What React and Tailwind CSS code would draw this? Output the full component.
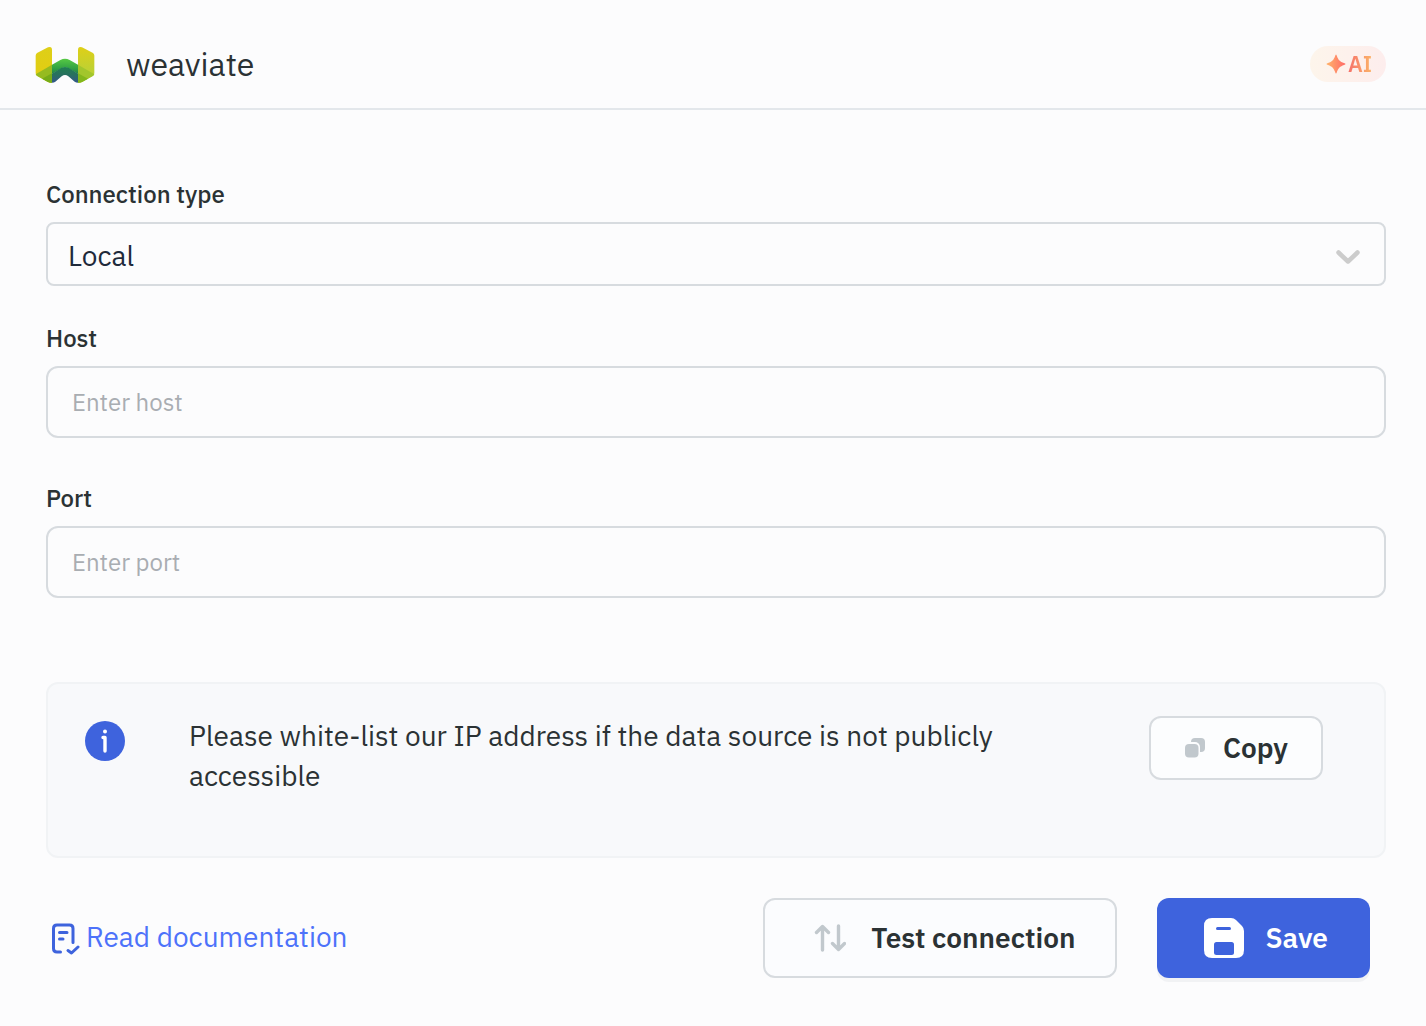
import React from "react";

function WeaviateLogo() {
  return (
    <svg viewBox="15 18 180 111" className="h-[37px] w-15" aria-hidden="true">
      <defs>
        <linearGradient id="wingL" x1="0" y1="0" x2="0" y2="1">
          <stop offset="0" stopColor="#decf18" />
          <stop offset="1" stopColor="#e3cd10" />
        </linearGradient>
        <linearGradient id="wingR" x1="0" y1="0" x2="0" y2="1">
          <stop offset="0" stopColor="#dfcf17" />
          <stop offset="0.6" stopColor="#c0d131" />
          <stop offset="1" stopColor="#b5d038" />
        </linearGradient>
        <linearGradient id="fold" x1="0" y1="0" x2="0" y2="1">
          <stop offset="0" stopColor="#56c944" />
          <stop offset="0.6" stopColor="#33a444" />
          <stop offset="1" stopColor="#238049" />
        </linearGradient>
        <linearGradient id="core" x1="0" y1="0" x2="0" y2="1">
          <stop offset="0" stopColor="#1f8050" />
          <stop offset="0.5" stopColor="#28705f" />
          <stop offset="1" stopColor="#33568a" />
        </linearGradient>
      </defs>
      <path d="M17 47Q17 42 21 39L54 22Q66 18 66 30V128Q60 129 54 126L21 107Q17 104 17 99Z" fill="url(#wingL)" />
      <path d="M193 47Q193 42 189 39L156 22Q144 18 144 30V128Q150 129 156 126L189 107Q193 104 193 99Z" fill="url(#wingR)" />
      <path d="M17 103L66 74V128Q60 129 54 126L20 107Z" fill="#96bb20" />
      <path d="M193 103L144 74V128Q150 129 156 126L190 107Z" fill="#a2c62c" />
      <path d="M36 116L66 100V128Q60 129 54 126Z" fill="#77ac18" />
      <path d="M174 116L144 100V128Q150 129 156 126Z" fill="#83b71c" />
      <path d="M66 74L91 60Q105 53 119 60L144 74V102L115 85Q105 79 95 85L66 102Z" fill="url(#fold)" />
      <path d="M66 101L93 84Q105 78 117 84L144 101V128Q138 128 134 125L115 109Q105 101 95 109L76 125Q72 128 66 128Z" fill="url(#core)" />
    </svg>
  );
}

function AiBadge() {
  return (
    <div className="flex h-9 items-center rounded-full bg-linear-to-r from-[#fdf5eb] to-[#fdeded] pr-[14px] pl-4">
      <svg viewBox="0 0 20 20" className="size-5" aria-hidden="true">
        <defs>
          <linearGradient id="spark" x1="0" y1="0" x2="1" y2="0">
            <stop offset="0.05" stopColor="#ffb06a" />
            <stop offset="0.85" stopColor="#ff7468" />
          </linearGradient>
        </defs>
        <path d="M10 .5Q10.500 .5 10.900 2C12.300 6 14 7.700 18 9.100Q19.500 9.500 19.500 10Q19.500 10.500 18 10.900C14 12.300 12.300 14 10.900 18Q10.500 19.500 10 19.500Q9.500 19.500 9.100 18C7.700 14 6 12.300 2 10.900Q.5 10.500.5 10Q.5 9.500 2 9.100C6 7.700 7.700 6 9.100 2Q9.500 .5 10 .5Z" fill="url(#spark)" />
      </svg>
      <span className="ml-0.5 bg-linear-to-r from-[#f5706a] to-[#fbb468] bg-clip-text text-[22px] leading-6 font-semibold text-transparent">
        AI
      </span>
    </div>
  );
}

function Chevron() {
  return (
    <svg viewBox="0 0 24 14" className="pointer-events-none absolute inset-y-0 right-[26px] mt-[3px] h-full w-6" aria-hidden="true">
      <path d="M2.500 2.500L12 11.500L21.500 2.500" fill="none" stroke="#ccc" strokeWidth="4.500" strokeLinecap="round" strokeLinejoin="round" />
    </svg>
  );
}

function TextField({ id, label, placeholder }) {
  return (
    <div>
      <label htmlFor={id} className="block text-2xl leading-8 font-medium">{label}</label>
      <input id={id} type="text" placeholder={placeholder} className="mt-3 block h-18 w-full rounded-xl border-2 border-[#d7dbdf] bg-transparent px-6 text-2xl outline-none placeholder:text-[#a9adb2]" />
    </div>
  );
}

export default function App() {
  return (
    <main className="min-h-screen bg-[#fcfcfd] pb-12 font-['IBM_Plex_Sans',Roboto,sans-serif] text-[#2b3234]">
      <header className="flex items-center justify-between border-b-2 border-[#e3e7eb] pt-[46px] pr-10 pb-[26px] pl-[35px]">
        <div className="flex h-9 items-center gap-[31px]">
          <WeaviateLogo />
          <h1 className="text-[32px] leading-9">weaviate</h1>
        </div>
        <AiBadge />
      </header>

      <form className="pt-[68px] pr-10 pl-[46px]" onSubmit={(e) => e.preventDefault()}>
        <div>
          <label htmlFor="type" className="block text-2xl leading-8 font-medium">Connection type</label>
          <div className="relative mt-3">
            <select id="type" className="block h-16 w-full appearance-none rounded-lg border-2 border-[#d7dbdf] bg-transparent px-5 pt-1 text-[28px] text-[#1f2a3b] outline-none">
              <option>Local</option>
            </select>
            <Chevron />
          </div>
        </div>
        <div className="mt-9">
          <TextField id="host" label="Host" placeholder="Enter host" />
        </div>
        <div className="mt-11">
          <TextField id="port" label="Port" placeholder="Enter port" />
        </div>

        <section className="mt-[84px] flex min-h-44 items-start rounded-xl border-2 border-[#f1f3f5] bg-[#f8f9fb] py-8 pr-[61px] pl-[37px]">
          <svg viewBox="0 0 40 40" className="mt-[5px] size-10 shrink-0" aria-hidden="true">
            <circle cx="20" cy="20" r="20" fill="#3e63dd" />
            <circle cx="20" cy="10.500" r="2" fill="#fff" />
            <path d="M18 16.500H20V30" fill="none" stroke="#fff" strokeWidth="3.400" strokeLinecap="round" strokeLinejoin="round" />
          </svg>
          <p className="ml-16 max-w-[840px] flex-1 text-[28px] leading-10">
            Please white-list our IP address if the data source is not publicly accessible
          </p>
          <button type="button" className="ml-auto flex h-16 items-center gap-[17px] rounded-xl border-2 border-[#d7dbdf] bg-[#fcfdfe] px-[33px] text-[28px] font-semibold">
            <svg viewBox="0 0 22 22" className="size-[22px]" aria-hidden="true">
              <rect x="7" y="1" width="14" height="14" rx="4" fill="#c1c8cd" />
              <rect x="0" y="5" width="16" height="16" rx="5" fill="#fcfdfe" />
              <rect x="1" y="7" width="13.500" height="13.500" rx="4" fill="#c1c8cd" />
            </svg>
            Copy
          </button>
        </section>

        <footer className="mt-10 flex items-center pr-4 pl-1">
          <a href="#docs" className="flex items-center gap-1.5 pb-0.5 text-[28px] leading-10 text-[#4d72fa]">
            <svg viewBox="0 0 30 32" className="mt-1 h-8 w-[30px]" fill="none" stroke="#3e63dd" strokeWidth="3" strokeLinecap="round" strokeLinejoin="round" aria-hidden="true">
              <path d="M10.500 29H7Q3.500 29 3.500 25.500V5.500Q3.500 2 7 2H19.500Q23 2 23 5.500V19.500" />
              <path d="M9.500 9.500H17M9.500 16H13M18 27.500L21.500 30L28 24" />
            </svg>
            Read documentation
          </a>
          <button type="button" className="ml-auto flex h-20 items-center gap-[25px] rounded-xl border-2 border-[#d7dbdf] bg-[#fbfcfe] pr-10 pl-[49px] text-[28px] font-semibold">
            <svg viewBox="0 0 32 28" className="h-7 w-8" fill="none" stroke="#c1c8cd" strokeWidth="3.400" strokeLinecap="round" strokeLinejoin="round" aria-hidden="true">
              <path d="M8.500 26V2.500M2.500 8.500L8.500 2.500L14.500 8.500M24.500 2V25.500M18.500 19.500L24.500 25.500L30.500 19.500" />
            </svg>
            Test connection
          </button>
          <button type="submit" className="ml-10 flex h-20 items-center gap-[21px] rounded-xl bg-[#3e63dd] pr-[42px] pl-[47px] text-[28px] font-semibold text-white shadow-[0_4px_0_#f1f2f4]">
            <svg viewBox="0 0 40 40" className="size-10" aria-hidden="true">
              <path d="M8 0H27Q30 0 32 2L38 8Q40 10 40 13V32Q40 40 32 40H8Q0 40 0 32V8Q0 0 8 0Z" fill="#fff" />
              <path d="M13.500 10.500H25.500" stroke="#3e63dd" strokeWidth="3" strokeLinecap="round" />
              <rect x="10" y="24" width="20" height="13" rx="2.500" fill="#3e63dd" />
            </svg>
            Save
          </button>
        </footer>
      </form>
    </main>
  );
}
